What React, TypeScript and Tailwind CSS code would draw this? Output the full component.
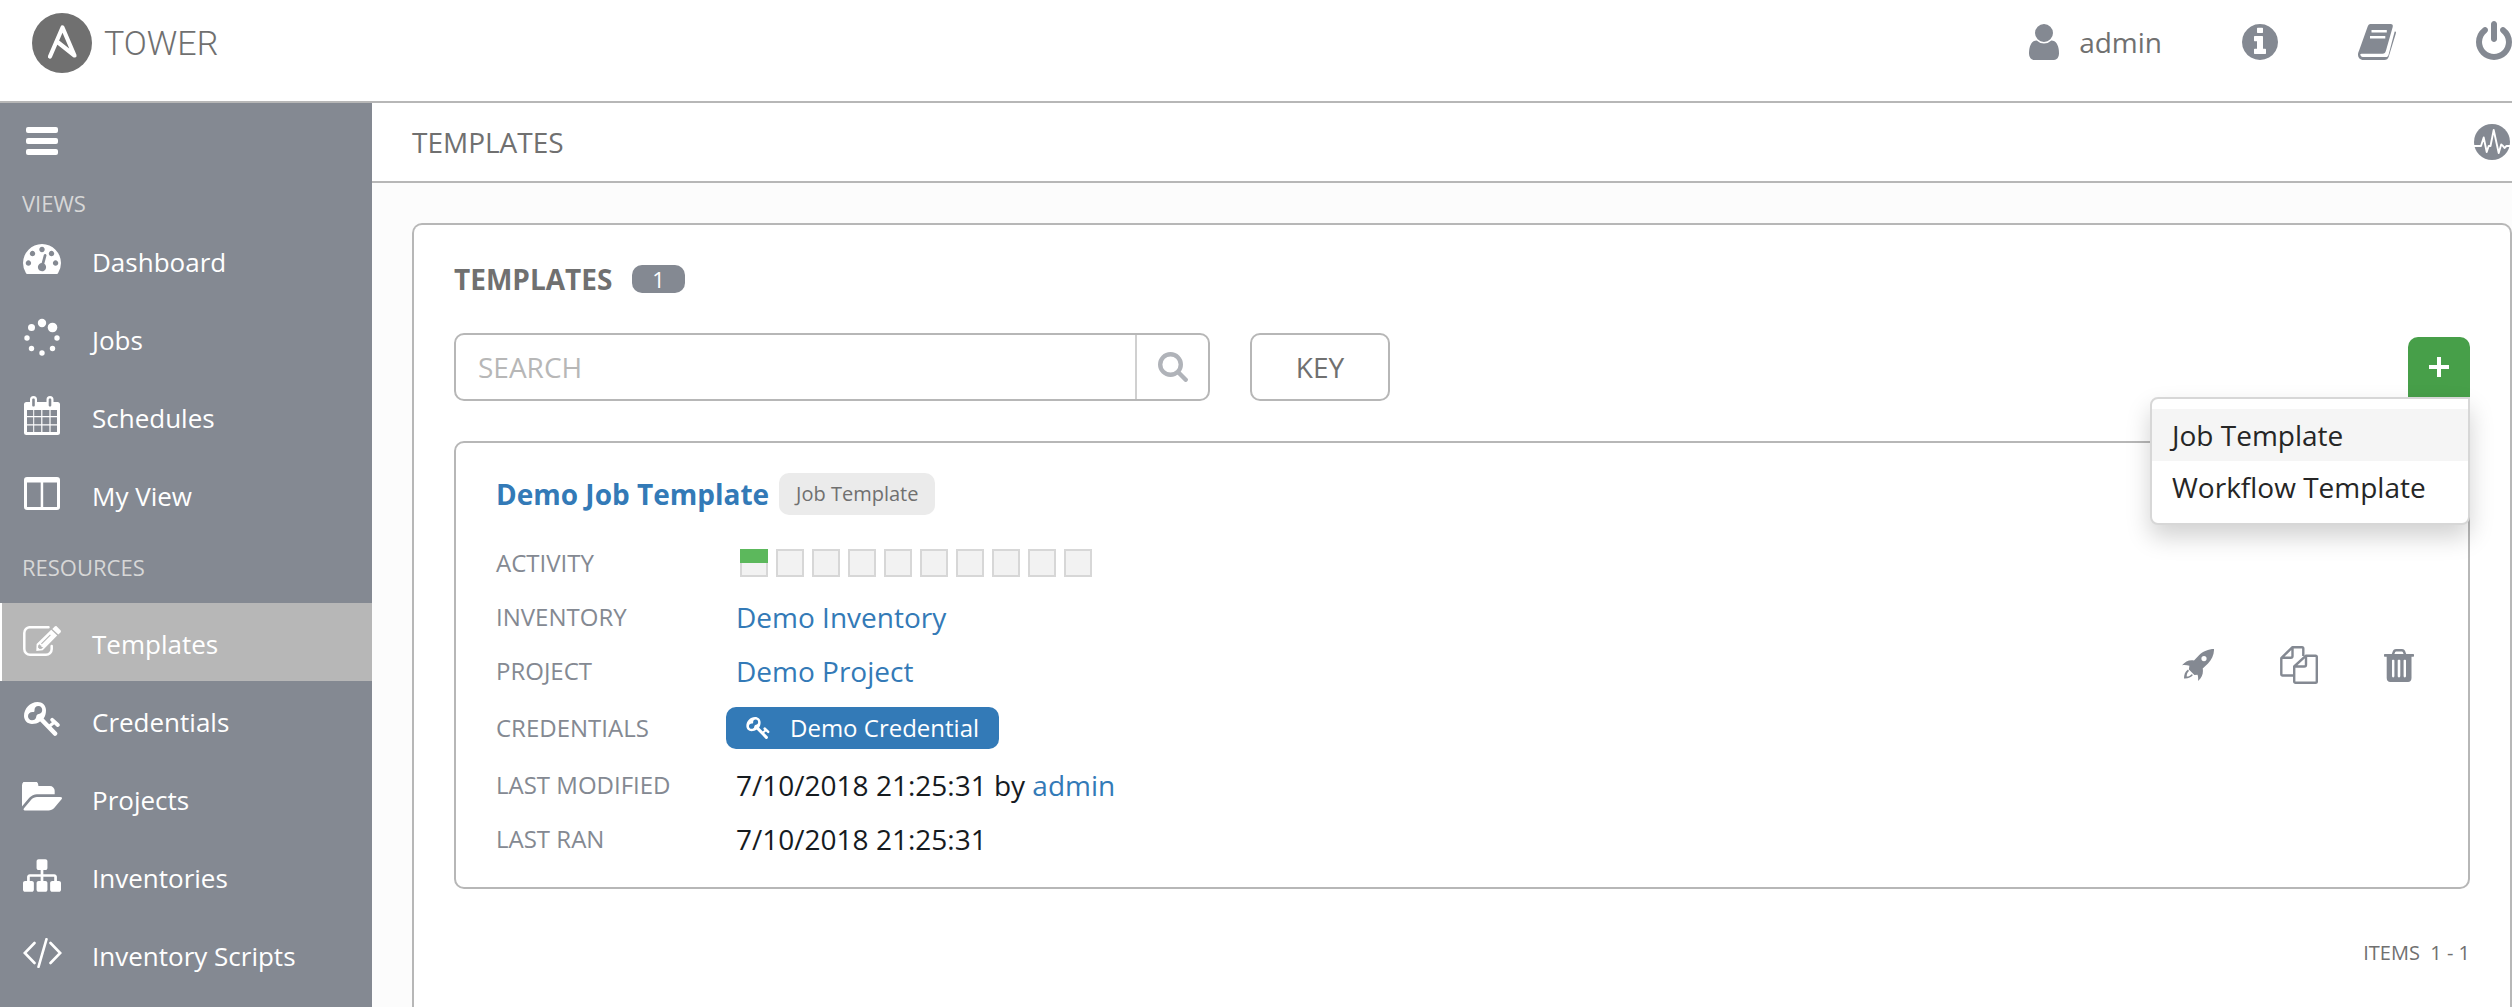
import React, { useState } from "react";

type IconProps = { className?: string };

const Glyph = ({ d, box = "0 0 1792 1792", className = "" }: { d: string; box?: string; className?: string }) => (
  <svg viewBox={box} className={className} fill="currentColor" aria-hidden="true">
    <path d={d} />
  </svg>
);

const USER =
  "M1536 1399q0 109-62.5 187t-150.5 78h-854q-88 0-150.5-78t-62.5-187q0-85 8.5-160.5t31.5-152 58.5-131 94-89 134.5-34.5q131 128 313 128t313-128q76 0 134.5 34.500t94 89 58.500 131 31.500 152 8.500 160.500zm-256-887q0 159-112.500 271.500t-271.500 112.500-271.500-112.500-112.500-271.500 112.500-271.500 271.500-112.500 271.500 112.500 112.500 271.500z";
const INFO =
  "M1152 1376v-160q0-14-9-23t-23-9h-96v-512q0-14-9-23t-23-9h-320q-14 0-23 9t-9 23v160q0 14 9 23t23 9h96v320h-96q-14 0-23 9t-9 23v160q0 14 9 23t23 9h448q14 0 23-9t9-23zm-128-896v-160q0-14-9-23t-23-9h-192q-14 0-23 9t-9 23v160q0 14 9 23t23 9h192q14 0 23-9t9-23zm640 416q0 209-103 385.500t-279.500 279.500-385.500 103-385.500-103-279.500-279.500-103-385.500 103-385.500 279.500-279.500 385.500-103 385.500 103 279.500 279.500 103 385.500z";
const POWER =
  "M1664 896q0 156-61 298t-164 245-245 164-298 61-298-61-245-164-164-245-61-298q0-182 80.500-343t226.500-270q43-32 95.500-25t83.500 50q32 42 24.500 94.500t-49.500 84.500q-98 74-151.500 181t-53.500 228q0 104 40.500 198.500t109.500 163.500 163.500 109.500 198.500 40.500 198.500-40.500 163.500-109.500 109.500-163.500 40.500-198.500q0-121-53.500-228t-151.500-181q-42-32-49.500-84.500t24.500-94.500q31-43 84-50t95 25q146 109 226.500 270t80.500 343zm-640-768v640q0 52-38 90t-90 38-90-38-38-90v-640q0-52 38-90t90-38 90 38 38 90z";
const DASH =
  "M384 1152q0-53-37.500-90.500t-90.500-37.500-90.500 37.500-37.500 90.500 37.500 90.500 90.500 37.500 90.500-37.500 37.500-90.500zm192-448q0-53-37.500-90.500t-90.500-37.500-90.500 37.500-37.500 90.500 37.500 90.500 90.500 37.500 90.500-37.500 37.500-90.500zm428 481l101-382q6-26-7.500-48.500t-38.500-29.500-48 6.500-30 39.500l-101 382q-60 5-107 43.500t-63 98.500q-20 77 20 146t117 89 146-20 89-117q16-60-6-117t-72-91zm660-33q0-53-37.500-90.500t-90.500-37.500-90.500 37.500-37.500 90.500 37.500 90.500 90.500 37.500 90.500-37.500 37.500-90.500zm-640-640q0-53-37.500-90.500t-90.500-37.500-90.500 37.500-37.500 90.500 37.500 90.500 90.500 37.500 90.500-37.500 37.500-90.500zm448 192q0-53-37.500-90.500t-90.500-37.500-90.500 37.500-37.500 90.500 37.500 90.500 90.500 37.500 90.500-37.500 37.500-90.500zm320 448q0 261-141 483-19 29-54 29h-1402q-35 0-54-29-141-221-141-483 0-182 71-348t191-286 286-191 348-71 348 71 286 191 191 286 71 348z";
const FOLDER =
  "M1879 952q0 31-31 66l-336 396q-43 51-120.500 86.500t-143.500 35.500h-1088q-34 0-60.500-13t-26.500-43q0-31 31-66l336-396q43-51 120.500-86.500t143.500-35.500h1088q34 0 60.500 13t26.500 43zm-343-344v160h-832q-94 0-197 47.500t-164 119.500l-337 396-5 6q0-4-.5-12.500t-.5-12.500v-960q0-92 66-158t158-66h320q92 0 158 66t66 158v32h544q92 0 158 66t66 158z";
const SITEMAP =
  "M1792 1248v320q0 40-28 68t-68 28h-320q-40 0-68-28t-28-68v-320q0-40 28-68t68-28h96v-192h-512v192h96q40 0 68 28t28 68v320q0 40-28 68t-68 28h-320q-40 0-68-28t-28-68v-320q0-40 28-68t68-28h96v-192h-512v192h96q40 0 68 28t28 68v320q0 40-28 68t-68 28h-320q-40 0-68-28t-28-68v-320q0-40 28-68t68-28h96v-192q0-52 38-90t90-38h512v-192h-96q-40 0-68-28t-28-68v-320q0-40 28-68t68-28h320q40 0 68 28t28 68v320q0 40-28 68t-68 28h-96v192h512q52 0 90 38t38 90v192h96q40 0 68 28t28 68z";

const UserIcon = () => <Glyph d={USER} box="256 128 1280 1536" className="h-9 w-[30px]" />;
const InfoIcon = () => <Glyph d={INFO} box="128 128 1536 1536" className="size-9" />;
const PowerIcon = () => <Glyph d={POWER} box="128 0 1536 1664" className="h-[39px] w-9" />;

const BookIcon = () => (
  <svg viewBox="0 0 38 36" className="h-9 w-[38px]" aria-hidden="true">
    <path
      fill="currentColor"
      d="M12.500 0h20c2 0 2.700 1.300 2.200 3l-6.700 23.500c-.7 2.300-1.500 3.300-3.500 3.300H3.500c-1.200 0-1.600.8-.9 1.800.6 1 1.600 1.500 3.200 1.500h22c1.400 0 2.300-.5 2.700-2L36.600 7.800c.4-.6 1.300-.5 1.400.5 0 .7-.2 1.300-.4 2l-6.800 22.200C30.100 34.900 28.600 36 26.300 36H5.500C2 36 0 33.500 0 30.500c0-1.800.7-3 1.200-4.200L9.500 3C10.200 1 11 0 12.500 0z"
    />
    <path stroke="#fff" strokeWidth="2.400" d="M13.500 7.200h15.300M12 13.200h15.300" />
  </svg>
);

const ActivityIcon = () => (
  <svg viewBox="0 0 36 36" className="size-9" aria-hidden="true">
    <circle cx="18" cy="18" r="18" fill="currentColor" />
    <path
      d="M0 22h7l2.700-8.500L12.700 28l2-6h1.800L19.700 6l5 23 2.500-8.500 1.800 1.500 1.500 2 2-2h3.500"
      fill="none"
      stroke="#fff"
      strokeWidth="1.900"
      strokeLinejoin="round"
    />
  </svg>
);

const SpinnerIcon = () => (
  <svg viewBox="0 0 38 38" className="size-[38px]" fill="currentColor" aria-hidden="true">
    <circle cx="19" cy="5" r="4.200" />
    <circle cx="29.500" cy="9.500" r="4.800" />
    <circle cx="34" cy="20" r="2.700" />
    <circle cx="29.500" cy="30.500" r="2.700" />
    <circle cx="19" cy="35" r="2.700" />
    <circle cx="8.500" cy="30.500" r="2.700" />
    <circle cx="4" cy="20" r="2.700" />
    <circle cx="8.500" cy="9.500" r="3.500" />
  </svg>
);

const CalendarIcon = () => (
  <svg viewBox="0 0 36 39" className="h-[39px] w-9" aria-hidden="true">
    <path
      fill="currentColor"
      fillRule="evenodd"
      d="M2.500 6H6V3.500a3.500 3.500 0 0 1 7 0V6h9.500V3.500a3.500 3.500 0 0 1 7 0V6h4A2.500 2.500 0 0 1 36 8.500v28a2.500 2.500 0 0 1-2.500 2.500h-31A2.500 2.500 0 0 1 0 36.500v-28A2.500 2.500 0 0 1 2.500 6zM3 14v6h6.200v-6zm7.200 0v6h7v-6zm8.200 0v6h7v-6zm8.200 0v6H33v-6zM3 21.200v7h6.200v-7zm7.200 0v7h7v-7zm8.200 0v7h7v-7zm8.200 0v7H33v-7zM3 29.400V36h6.200v-6.600zm7.200 0V36h7v-6.600zm8.200 0V36h7v-6.600zm8.200 0V36H33v-6.600zM9.500 2.500c-.8 0-1.300.5-1.300 1.300v5.400c0 .8.500 1.300 1.300 1.300s1.300-.5 1.300-1.300V3.800c0-.8-.5-1.300-1.300-1.300zm16.500 0c-.8 0-1.300.5-1.300 1.300v5.400c0 .8.500 1.300 1.300 1.300s1.300-.5 1.300-1.300V3.800c0-.8-.5-1.300-1.300-1.300z"
    />
  </svg>
);

const ColumnsIcon = () => (
  <svg viewBox="0 0 36 33" className="h-[33px] w-9" aria-hidden="true">
    <path
      fill="currentColor"
      fillRule="evenodd"
      d="M3 0h30a3 3 0 0 1 3 3v27a3 3 0 0 1-3 3H3a3 3 0 0 1-3-3V3a3 3 0 0 1 3-3zM3 5.500V30h13.700V5.500zm16.200 0V30H33V5.500z"
    />
  </svg>
);

const EditIcon = () => (
  <svg viewBox="0 0 38 30" className="h-[30px] w-[38px]" aria-hidden="true">
    <path
      d="M25.500 1.200H7A5.700 5.700 0 0 0 1.300 7v16A5.700 5.700 0 0 0 7 28.700h16a5.700 5.700 0 0 0 5.700-5.700v-3"
      fill="none"
      stroke="currentColor"
      strokeWidth="2.500"
      strokeLinecap="round"
    />
    <path
      fill="currentColor"
      fillRule="evenodd"
      d="M28.200 3.800l6 5.800L19.700 24.300l-6.400.6.300-6.800zM27 8.500L18 17.600l.8.700 9-9zM16.600 18l-1.400 1.400-.2 2.200 1.600 1.500 2-.3 1.700-1.600-1.800-.3-.3-1.500-1.300-.1zM31.700.6c.7-.6 1.400-.7 2.100-.1l3.700 3.700c.6.700.6 1.500 0 2.200l-2.200 2.200-6-5.700z"
    />
  </svg>
);

const KeyIcon = ({ className = "h-[34px] w-9" }: IconProps) => (
  <svg viewBox="0 0 36 34" className={className} fill="none" stroke="currentColor" aria-hidden="true">
    <path
      fill="currentColor"
      fillRule="evenodd"
      stroke="none"
      d="M13.500 0C18.500 0 22 3.500 22 8.200c0 3.300-.7 5.800-2.400 8.300L16 19.500C13.500 21.300 11 22 8 22c-4.500 0-8-3.600-8-8C0 6.500 6 0 13.500 0zM14.500 3.900c-2.700 0-4.200 1.900-4 4.600.1 1-.6 1.700-1.700 1.600C6 10 4 11.800 4 14.300c0 2.300 1.600 4 4 4 2.200 0 4-1.300 4.200-3.300.1-1.500 1-2.600 2.600-2.900 2-.4 3.400-2 3.400-4.100 0-2.400-1.400-4.100-3.700-4.100z"
    />
    <path strokeWidth="4.600" d="M16 16L31 31.500" strokeLinecap="round" />
    <path strokeWidth="3" d="M24.500 25l6-5" />
    <path strokeWidth="3.800" d="M28.200 17.800l5.600 5.200" strokeLinecap="round" />
  </svg>
);

const CodeIcon = () => (
  <svg viewBox="0 0 39 30" className="h-[30px] w-[39px]" fill="none" stroke="currentColor" strokeWidth="2.600" aria-hidden="true">
    <path d="M11.500 5L1.800 15l9.700 10M27.500 5l9.700 10-9.700 10M23.500 1.200L15.500 28.800" strokeLinecap="round" />
  </svg>
);

const RocketIcon = () => (
  <svg viewBox="0 0 32 32" className="size-8" fill="currentColor" aria-hidden="true">
    <path
      fillRule="evenodd"
      d="M32 0c.2 5-2 10.500-6 14.500l-5.300 5c.8 4.500-.4 8.800-4.700 12.500.3-2.200.2-4.200-.4-6.300l-3.200.2-5.500-5.500.5-3.600C5 16 2.500 15.900 0 16.200c3.300-4 7.500-5.800 12-4.800l5-5.200C21 2.300 26.500 0 32 0zm-10 7a2.600 2.600 0 1 0 0 5.200A2.600 2.600 0 0 0 22 7z"
    />
    <path d="M6 20.500c-3 2-4 5-4 9 4 .3 7-1 9-3.500l-1.500-.8c-1.200 1.500-2.700 2.300-4.800 2.300 0-2.500.8-4.200 2.300-5.500z" />
  </svg>
);

const CopyIcon = () => (
  <svg viewBox="0 0 38 38" className="size-[38px]" fill="none" stroke="currentColor" strokeWidth="2.400" strokeLinejoin="round" aria-hidden="true">
    <path d="M14 29.500H2.500a1.200 1.200 0 0 1-1.200-1.200V12L12.500 1.200H22a1.300 1.300 0 0 1 1.300 1.300V10M12.500 1.200V10a1.800 1.800 0 0 1-1.800 1.800H1.300" />
    <path d="M26 9.700h9.500a1.300 1.300 0 0 1 1.300 1.300v24.500a1.300 1.300 0 0 1-1.300 1.300h-20a1.300 1.300 0 0 1-1.300-1.300V20.500zM26 9.700v9a1.800 1.800 0 0 1-1.800 1.800h-10" />
  </svg>
);

const TrashIcon = () => (
  <svg viewBox="0 0 30 33" className="h-[33px] w-[30px]" fill="currentColor" aria-hidden="true">
    <path
      fillRule="evenodd"
      d="M7.800 5l1.100-3C9.400.7 10.500 0 12 0h6c1.500 0 2.600.7 3.100 2l1.100 3H29c.7 0 1 .4 1 1v.8c0 .6-.3 1-1 1h-1.500V29c0 2.500-1.500 4-3.500 4H6.200c-2 0-3.500-1.500-3.500-4V7.800H1c-.7 0-1-.4-1-1V6c0-.6.300-1 1-1zm2.600 0h9.200l-.8-2c-.2-.4-.5-.6-1-.6h-5.600c-.5 0-.8.2-1 .6zM8 11.500V27c0 .9.500 1.400 1.200 1.400s1.200-.5 1.200-1.400V11.500c0-.4-.3-.7-.7-.7h-1c-.4 0-.7.3-.7.700zm5.700 0V27c0 .9.500 1.400 1.300 1.400s1.300-.5 1.300-1.400V11.500c0-.4-.3-.7-.7-.7h-1.200c-.4 0-.7.3-.7.700zm5.900 0V27c0 .9.500 1.400 1.200 1.400S22 27.900 22 27V11.500c0-.4-.3-.7-.7-.7h-1c-.4 0-.7.3-.7.700z"
    />
  </svg>
);

const SearchIcon = () => (
  <svg viewBox="0 0 30 30" className="size-[30px]" fill="none" stroke="currentColor" aria-hidden="true">
    <circle cx="12.500" cy="12.500" r="10.300" strokeWidth="4.400" />
    <path d="M20.500 20.500l7.200 7.200" strokeWidth="4.400" strokeLinecap="round" />
  </svg>
);

const PlusIcon = () => (
  <svg viewBox="0 0 20 20" className="size-5" stroke="currentColor" strokeWidth="4" aria-hidden="true">
    <path d="M10 0v20M0 10h20" />
  </svg>
);

const Logo = () => (
  <svg viewBox="0 0 60 60" className="size-[60px]" aria-hidden="true">
    <circle cx="30" cy="30" r="30" fill="#707070" />
    <path
      d="M18 43.500L30.500 14.500L42.500 42.500L25.500 29"
      fill="none"
      stroke="#fff"
      strokeWidth="4.200"
      strokeLinejoin="round"
      strokeLinecap="round"
    />
  </svg>
);

const views = [
  { label: "Dashboard", icon: <Glyph d={DASH} box="0 256 1792 1408" className="h-[30px] w-[38px]" /> },
  { label: "Jobs", icon: <SpinnerIcon /> },
  { label: "Schedules", icon: <CalendarIcon /> },
  { label: "My View", icon: <ColumnsIcon /> },
];

const resources = [
  { label: "Templates", icon: <EditIcon />, active: true },
  { label: "Credentials", icon: <KeyIcon /> },
  { label: "Projects", icon: <Glyph d={FOLDER} box="0 256 1880 1280" className="h-[30px] w-10" /> },
  { label: "Inventories", icon: <Glyph d={SITEMAP} box="0 128 1792 1536" className="h-[33px] w-[38px]" /> },
  { label: "Inventory Scripts", icon: <CodeIcon /> },
];

function NavItem({ label, icon, active = false }: { label: string; icon: React.ReactNode; active?: boolean }) {
  return (
    <li>
      <a
        href="#"
        aria-current={active ? "page" : undefined}
        className={
          active
            ? "flex h-[78px] items-center border-l-2 border-white bg-[#b7b7b7] pl-5"
            : "flex h-[78px] items-center border-l-2 border-transparent pl-5"
        }
      >
        <span className="flex w-10 shrink-0 justify-center pb-0.5">{icon}</span>
        <span className="ml-[30px] pt-1 text-[26px] leading-9 font-medium">{label}</span>
      </a>
    </li>
  );
}

function Row({ label, children }: { label: string; children: React.ReactNode }) {
  return (
    <>
      <dt className="text-2xl leading-9 text-[#848992]">{label}</dt>
      <dd className="text-[28px] leading-9 text-[#161b1f]">{children}</dd>
    </>
  );
}

export default function App() {
  const [open, setOpen] = useState(true);
  return (
    <div className="flex h-screen flex-col overflow-hidden bg-[#fcfcfc] font-['Open_Sans','Noto_Sans',sans-serif] text-[#707070]">
      <header className="flex h-[103px] shrink-0 items-start justify-between border-b-2 border-[#b7b7b7] bg-white pl-8">
        <a href="#" className="mt-[13px] flex items-center gap-3">
          <Logo />
          <span className="font-['Roboto',sans-serif] text-[34px] leading-[60px] font-light">TOWER</span>
        </a>
        <nav aria-label="Account" className="mt-5 flex items-center text-[#848992]">
          <a href="#" className="flex items-center gap-5">
            <UserIcon />
            <span className="text-[28px] leading-[44px] text-[#707070]">admin</span>
          </a>
          <button type="button" aria-label="About" className="ml-20">
            <InfoIcon />
          </button>
          <button type="button" aria-label="Documentation" className="ml-20">
            <BookIcon />
          </button>
          <button type="button" aria-label="Log out" className="-mt-1 ml-20">
            <PowerIcon />
          </button>
        </nav>
      </header>

      <div className="flex min-h-0 flex-1">
        <nav aria-label="Main" className="w-[372px] shrink-0 overflow-hidden bg-[#848992] text-white">
          <button type="button" aria-label="Toggle menu" className="mt-6 ml-[26px] flex w-8 flex-col gap-[5px]">
            <span className="h-1.5 w-full rounded-xs bg-white" />
            <span className="h-1.5 w-full rounded-xs bg-white" />
            <span className="h-1.5 w-full rounded-xs bg-white" />
          </button>
          <h2 className="mt-[30px] ml-[22px] text-[22px] leading-9 text-[#d7d7d7]">VIEWS</h2>
          <ul>
            {views.map((v) => (
              <NavItem key={v.label} {...v} />
            ))}
          </ul>
          <h2 className="mt-4 mb-[18px] ml-[22px] text-[22px] leading-9 text-[#d7d7d7]">RESOURCES</h2>
          <ul>
            {resources.map((r) => (
              <NavItem key={r.label} {...r} />
            ))}
          </ul>
        </nav>

        <div className="flex min-w-0 flex-1 flex-col">
          <div className="flex h-20 shrink-0 items-center justify-between border-b-2 border-[#b7b7b7] bg-white pr-[2px] pl-10">
            <span className="text-[28px] leading-9">TEMPLATES</span>
            <button type="button" aria-label="Activity stream" className="text-[#848992]">
              <ActivityIcon />
            </button>
          </div>

          <main className="mt-10 ml-10 flex-1 rounded-t-[10px] border-2 border-b-0 border-[#b7b7b7] bg-white px-10 pt-9">
            <div className="flex items-center gap-5">
              <h1 className="text-[28px] leading-9 font-bold">TEMPLATES</h1>
              <span className="rounded-[10px] bg-[#848992] px-5 text-[22px] leading-7 text-white">1</span>
            </div>

            <div className="mt-9 flex items-center">
              <form className="flex h-[68px] w-[756px] rounded-[10px] border-2 border-[#b7b7b7]" onSubmit={(e) => e.preventDefault()}>
                <input
                  type="text"
                  aria-label="Search"
                  placeholder="SEARCH"
                  className="min-w-0 flex-1 px-[22px] text-[28px] outline-none placeholder:text-[#b7b7b7]"
                />
                <button type="submit" aria-label="Search" className="flex w-[73px] items-center justify-center border-l-2 border-[#d0d0d0] text-[#b0b3b9]">
                  <SearchIcon />
                </button>
              </form>
              <button type="button" className="ml-10 h-[68px] w-[140px] rounded-[10px] border-2 border-[#b7b7b7] text-[28px]">
                KEY
              </button>
              <div className="relative ml-auto">
                <button
                  type="button"
                  aria-label="Add template"
                  aria-expanded={open}
                  onClick={() => setOpen(!open)}
                  className="flex h-[60px] w-[62px] items-center justify-center rounded-t-[10px] bg-[#479f49] text-white"
                >
                  <PlusIcon />
                </button>
                {open && (
                  <ul className="absolute top-full right-0 w-80 rounded-lg rounded-tr-none border-2 border-[#d7d7d7] bg-white py-2.5 text-[28px] leading-[52px] text-[#262626] shadow-[0_12px_24px_rgba(0,0,0,0.18)]">
                    <li>
                      <a href="#" className="block bg-[#f5f5f5] px-5">
                        Job Template
                      </a>
                    </li>
                    <li>
                      <a href="#" className="block px-5">
                        Workflow Template
                      </a>
                    </li>
                  </ul>
                )}
              </div>
            </div>

            <section className="mt-10 flex items-center justify-between rounded-[10px] border-2 border-[#b7b7b7] py-[30px] pr-[54px] pl-10">
              <div>
                <div className="flex items-center gap-2.5">
                  <a href="#" className="text-[28px] leading-9 font-bold text-[#337ab7]">
                    Demo Job Template
                  </a>
                  <span className="rounded-[10px] bg-[#ebebeb] px-[17px] text-xl leading-[42px]">Job Template</span>
                </div>
                <dl className="mt-[30px] grid grid-cols-[240px_auto] items-center gap-y-[18px]">
                  <Row label="ACTIVITY">
                    <span className="flex gap-2 pl-1">
                      <span className="h-7 w-7 border-2 border-t-0 border-[#d7d7d7] bg-[#f2f2f2]">
                        <span className="-mx-[2px] block h-[14px] bg-[#5cb85c]" />
                      </span>
                      {Array.from({ length: 9 }, (_, i) => (
                        <span key={i} className="size-7 border-2 border-[#d7d7d7] bg-[#f2f2f2]" />
                      ))}
                    </span>
                  </Row>
                  <Row label="INVENTORY">
                    <a href="#" className="text-[#337ab7]">
                      Demo Inventory
                    </a>
                  </Row>
                  <Row label="PROJECT">
                    <a href="#" className="text-[#337ab7]">
                      Demo Project
                    </a>
                  </Row>
                  <Row label="CREDENTIALS">
                    <a href="#" className="-ml-[10px] inline-flex h-[42px] items-center gap-5 rounded-[10px] bg-[#337ab7] px-5 text-2xl font-medium text-white">
                      <KeyIcon className="h-[22px] w-6" />
                      Demo Credential
                    </a>
                  </Row>
                  <Row label="LAST MODIFIED">
                    7/10/2018 21:25:31 by{" "}
                    <a href="#" className="text-[#337ab7]">
                      admin
                    </a>
                  </Row>
                  <Row label="LAST RAN">7/10/2018 21:25:31</Row>
                </dl>
              </div>
              <div className="flex items-center gap-[66px] text-[#848992]">
                <button type="button" aria-label="Launch">
                  <RocketIcon />
                </button>
                <button type="button" aria-label="Copy">
                  <CopyIcon />
                </button>
                <button type="button" aria-label="Delete">
                  <TrashIcon />
                </button>
              </div>
            </section>

            <p className="mt-12 text-right text-xl leading-8 whitespace-pre">ITEMS  1 - 1</p>
          </main>
        </div>
      </div>
    </div>
  );
}
